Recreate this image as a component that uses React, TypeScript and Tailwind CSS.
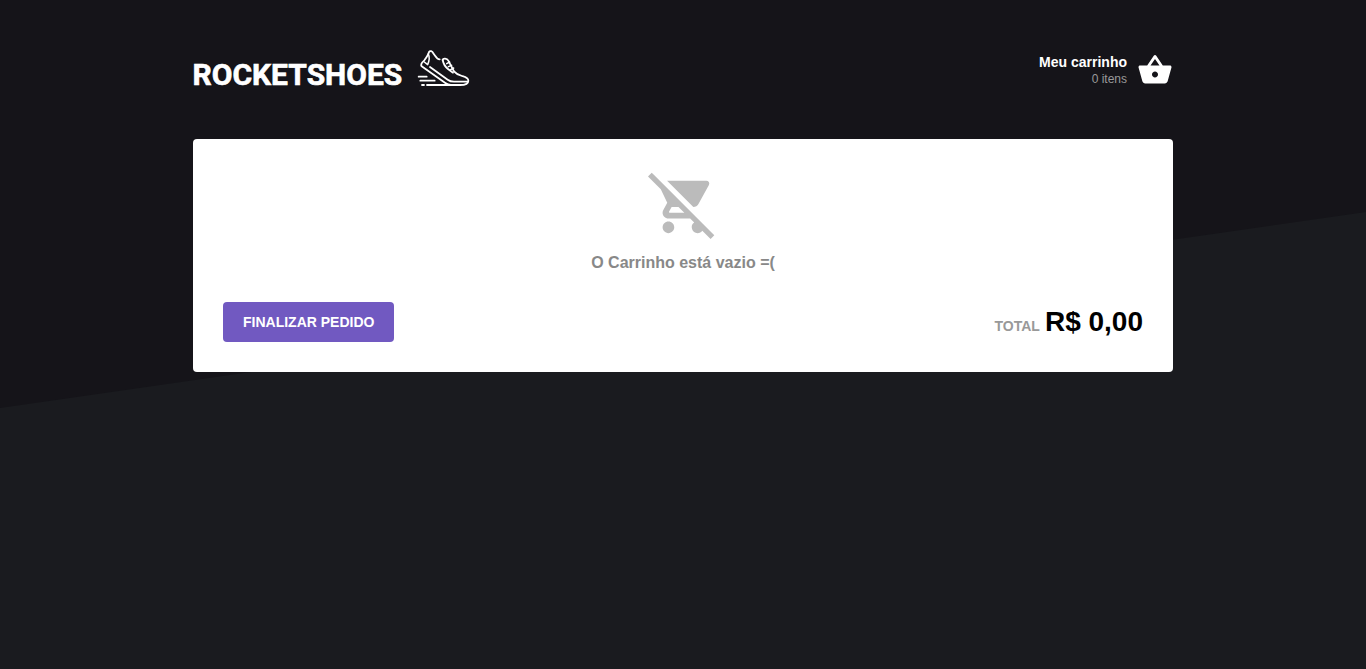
import { MdRemoveShoppingCart, MdShoppingBasket } from 'react-icons/md';

function ShoeIcon() {
  return (
    <svg
      width="54"
      height="40"
      viewBox="21 27 162 120"
      fill="none"
      stroke="#fff"
      strokeWidth="5.4"
      strokeLinecap="round"
      strokeLinejoin="round"
      aria-hidden="true"
    >
      <path d="M89 58 C79 58 76 47 70 40 C67 33 60 31 57 36 C55 44 49 53 43 61 C36 67 31 74 35 79 L106 129 Q114 135 123 135 L150 135 C164 135 175 131 175 122 C175 113 166 111 156 108 C145 105 138 101 132 94 L115 62 C111 55 99 54 98 60" />
      <path d="M55 42 C60 52 58 62 53 74 L43 66" strokeWidth="4.5" />
      <path d="M60 81 L113 119 Q121 125 132 125 L172 125" />
      <path d="M98 60 C100 70 104 79 113 86 L129 98" />
      <path d="M110 71 L119 66 M115 80 L125 76 M122 89 L131 84" strokeWidth="4.5" />
      <path d="M26 110 H50 M31 122 H74 M36 135 H42 M51 135 H124" />
    </svg>
  );
}

function Header() {
  return (
    <header className="flex h-[39px] items-center justify-between">
      <a href="#" className="flex h-[39px] items-start text-white">
        <span className="mt-[7px] -ml-[0.5px] w-[224.5px] font-['Roboto',sans-serif] text-[30px] leading-[35px] font-bold [-webkit-text-stroke:0.6px_#fff]">
          ROCKETSHOES
        </span>
        <span className="-mt-px">
          <ShoeIcon />
        </span>
      </a>
      <a href="#" className="flex items-center">
        <div className="pt-[2px] text-right">
          <strong className="block text-[14px] leading-[17px] font-bold text-white">Meu carrinho</strong>
          <span className="block text-[12px] leading-[16px] text-[#999]">0 itens</span>
        </div>
        <MdShoppingBasket size={36} color="#fff" className="ml-[10px]" />
      </a>
    </header>
  );
}

function Cart() {
  return (
    <main className="mt-[50px] rounded-[4px] bg-white p-[30px]">
      <section className="flex flex-col items-center">
        <MdRemoveShoppingCart size={70} color="#bbb" />
        <strong className="mt-[15px] text-[16px] leading-[18px] font-bold text-[#888]">
          O Carrinho está vazio =(
        </strong>
      </section>
      <footer className="mt-[30px] flex h-[40px] items-center justify-between">
        <button className="h-[40px] w-[171px] rounded-[4px] bg-[#7159c1] pl-[20px] text-left text-[14px] font-bold whitespace-nowrap text-white">
          FINALIZAR PEDIDO
        </button>
        <div className="flex items-baseline">
          <span className="text-[14px] font-bold text-[#999]">TOTAL</span>
          <strong className="ml-[5px] text-[28px] leading-[32px] font-bold text-black">R$ 0,00</strong>
        </div>
      </footer>
    </main>
  );
}

export default function App() {
  return (
    <div className="relative isolate h-[669px] overflow-hidden bg-[#151419] font-['Liberation_Sans',Arial,sans-serif]">
      <div className="absolute inset-0 -z-10 bg-[#1a1b1f] [clip-path:polygon(0_408px,100%_212px,100%_100%,0_100%)]" />
      <div className="mx-auto w-[980px] pt-[50px]">
        <Header />
        <Cart />
      </div>
    </div>
  );
}
